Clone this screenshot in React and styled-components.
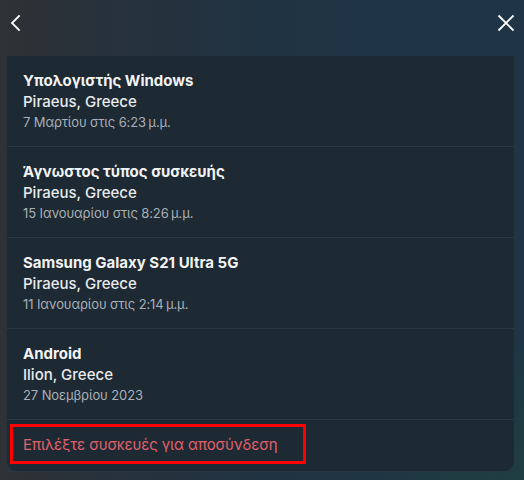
import React from "react";
import styled, { createGlobalStyle } from "styled-components";

const Global = createGlobalStyle`
  html, body { margin: 0; padding: 0; }
  body {
    width: 524px;
    height: 480px;
    overflow: hidden;
    font-family: Inter, "Noto Sans", "Liberation Sans", sans-serif;
    background:
      radial-gradient(ellipse 260px 200px at 100% 100%, rgba(30, 70, 60, 0.55), transparent 70%),
      linear-gradient(90deg, #2f3236 0%, #27313b 20%, #1f3343 55%, #1f3546 100%);
  }
`;

const Screen = styled.div`
  display: flex;
  flex-direction: column;
  height: 480px;
`;

const Header = styled.div`
  height: 56px;
  display: flex;
  align-items: flex-start;
  justify-content: space-between;
  padding: 11px 6px 0 3px;
  box-sizing: border-box;
`;

const IconButton = styled.button`
  background: none;
  border: 0;
  padding: 0;
  width: 24px;
  height: 24px;
  display: flex;
  align-items: center;
  justify-content: center;
  color: #ffffff;
  cursor: pointer;
`;

const Card = styled.div`
  margin: 0 10px 0 7px;
  background: #1d2933;
  border-radius: 0 0 12px 12px;
`;

const Row = styled.div`
  padding: 14px 16px 14px 16px;
  border-bottom: 1px solid #2a3843;
  display: flex;
  flex-direction: column;
`;

const Title = styled.div`
  font-size: 15px;
  line-height: 21px;
  font-weight: 700;
  color: #f2f3f4;
`;

const Location = styled.div`
  font-size: 15px;
  line-height: 21px;
  font-weight: 500;
  color: #e9ebed;
`;

const DateText = styled.div`
  font-size: 13px;
  line-height: 20px;
  font-weight: 400;
  color: #a9b0b7;
  letter-spacing: -0.1px;
`;

const ActionRow = styled.div`
  height: 52px;
  display: flex;
  align-items: flex-start;
  padding: 4px 0 0 3px;
  border-bottom: 1px solid #2a3843;
  box-sizing: border-box;
`;

const ActionButton = styled.button`
  background: none;
  border: 3px solid #ff0000;
  height: 40px;
  width: 296px;
  padding: 0 0 0 10px;
  text-align: left;
  font-family: Inter, "Noto Sans", "Liberation Sans", sans-serif;
  font-size: 15px;
  font-weight: 400;
  letter-spacing: -0.1px;
  color: #e0606a;
  cursor: pointer;
`;

const devices = [
  { name: "Υπολογιστής Windows", place: "Piraeus, Greece", date: "7 Μαρτίου στις 6:23\u202Fμ.μ." },
  { name: "Άγνωστος τύπος συσκευής", place: "Piraeus, Greece", date: "15 Ιανουαρίου στις 8:26\u202Fμ.μ." },
  { name: "Samsung Galaxy S21 Ultra 5G", place: "Piraeus, Greece", date: "11 Ιανουαρίου στις 2:14\u202Fμ.μ." },
  { name: "Android", place: "Ilion, Greece", date: "27 Νοεμβρίου 2023" },
];

export default function App() {
  return (
    <>
      <Global />
      <Screen>
        <Header>
          <IconButton aria-label="Πίσω">
            <svg width="12" height="16" viewBox="0 0 12 16" fill="none">
              <path d="M10 1 L3 8 L10 15" stroke="#fff" strokeWidth="1.8" strokeLinecap="square" />
            </svg>
          </IconButton>
          <IconButton aria-label="Κλείσιμο">
            <svg width="18" height="18" viewBox="0 0 18 18" fill="none">
              <path d="M1.5 1.5 L16.5 16.5 M16.5 1.5 L1.5 16.5" stroke="#fff" strokeWidth="1.8" />
            </svg>
          </IconButton>
        </Header>
        <Card>
          {devices.map((d) => (
            <Row key={d.name}>
              <Title>{d.name}</Title>
              <Location>{d.place}</Location>
              <DateText>{d.date}</DateText>
            </Row>
          ))}
          <ActionRow>
            <ActionButton>Επιλέξτε συσκευές για αποσύνδεση</ActionButton>
          </ActionRow>
        </Card>
      </Screen>
    </>
  );
}
